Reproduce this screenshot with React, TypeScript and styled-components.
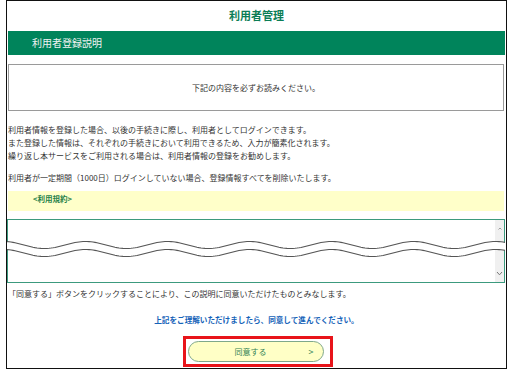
import React from 'react';
import styled, { createGlobalStyle } from 'styled-components';

const GlobalStyle = createGlobalStyle`
    html, body {
        margin: 0;
        padding: 0;
        background: #fff;
    }
    body {
        font-family: "Noto Sans CJK JP", "Noto Sans", sans-serif;
        color: #333;
    }
`;

const wavePath = (offset: number, width: number) => {
    const pts: string[] = [];
    for (let x = 0; x <= width; x += 2) {
        const y = offset + 3.5 * Math.sin(((x - 17) / 82) * Math.PI * 2);
        pts.push(`${x},${y.toFixed(2)}`);
    }
    return pts;
};

const Wave: React.FC<{ width: number }> = ({ width }) => {
    const top = wavePath(5, width);
    const bottom = wavePath(13, width);
    const band = `M${top.join(' L')} L${[...bottom].reverse().join(' L')} Z`;
    return (
        <WaveSvg width={width} height={20} viewBox={`0 0 ${width} 20`}>
            <path d={band} fill="#fff" />
            <path d={`M${top.join(' L')}`} fill="none" stroke="#555" strokeWidth={1.1} />
            <path d={`M${bottom.join(' L')}`} fill="none" stroke="#555" strokeWidth={1.1} />
        </WaveSvg>
    );
};

const App: React.FC = () => {
    return (
        <>
            <GlobalStyle />
            <Frame>
                <Title>利用者管理</Title>
                <SectionBar>利用者登録説明</SectionBar>
                <NoticeBox>下記の内容を必ずお読みください。</NoticeBox>
                <Paragraph gap={12}>
                    利用者情報を登録した場合、以後の手続きに際し、利用者としてログインできます。<br />
                    また登録した情報は、それぞれの手続きにおいて利用できるため、入力が簡素化されます。<br />
                    繰り返し本サービスをご利用される場合は、利用者情報の登録をお勧めします。
                </Paragraph>
                <Paragraph gap={9}>
                    利用者が一定期間（1000日）ログインしていない場合、登録情報すべてを削除いたします。
                </Paragraph>
                <TermsBar>&lt;利用規約&gt;</TermsBar>
                <TermsBox>
                    <TermsText />
                    <ScrollTrack>
                        <svg width="6" height="5" viewBox="0 0 6 5">
                            <path d="M1.5 3.5 L3 2 L4.5 3.5" fill="none" stroke="#888" strokeWidth="0.8" />
                        </svg>
                        <svg width="7" height="5" viewBox="0 0 7 5">
                            <path d="M1 1 L3.5 3.8 L6 1" fill="none" stroke="#777" strokeWidth="1" />
                        </svg>
                    </ScrollTrack>
                    <Wave width={499} />
                </TermsBox>
                <Paragraph gap={4}>
                    「同意する」ボタンをクリックすることにより、この説明に同意いただけたものとみなします。
                </Paragraph>
                <Guide>上記をご理解いただけましたら、同意して進んでください。</Guide>
                <Highlight>
                    <AgreeButton type="button">
                        <span>同意する</span>
                        <Arrow>&gt;</Arrow>
                    </AgreeButton>
                </Highlight>
            </Frame>
        </>
    );
};

const Frame = styled.div`
    box-sizing: border-box;
    width: 501px;
    height: 369px;
    margin-left: 6px;
    border: 1px solid #111;
    display: flex;
    flex-direction: column;
`;

const Title = styled.div`
    height: 30px;
    line-height: 28px;
    text-align: center;
    font-size: 11px;
    font-weight: bold;
    color: #0b7d55;
`;

const SectionBar = styled.div`
    height: 24px;
    margin: 0 1px 0 1px;
    padding-left: 24px;
    background: #00845b;
    color: #f2f2f2;
    font-size: 10px;
    line-height: 24px;
`;

const NoticeBox = styled.div`
    box-sizing: border-box;
    height: 47px;
    margin: 9px 2px 0 1px;
    border: 1px solid #9a9a9a;
    display: flex;
    align-items: center;
    justify-content: center;
    font-size: 8px;
    color: #333;
`;

const Paragraph = styled.p<{ gap: number }>`
    margin: ${props => props.gap}px 0 0 1px;
    font-size: 8px;
    line-height: 13px;
    color: #333;
    white-space: nowrap;
`;

const TermsBar = styled.div`
    height: 20px;
    margin: 7px 2px 0 1px;
    padding-left: 25px;
    background: #ffffc9;
    color: #1f7f4a;
    font-size: 7.5px;
    font-weight: bold;
    line-height: 16px;
`;

const TermsBox = styled.div`
    position: relative;
    box-sizing: border-box;
    height: 64px;
    margin: 8px 1px 0 0;
    border: 1px solid #3c9a7e;
    display: flex;
`;

const TermsText = styled.div`
    flex: 1;
`;

const ScrollTrack = styled.div`
    width: 9px;
    background: #f0f0f0;
    display: flex;
    flex-direction: column;
    align-items: center;
    justify-content: space-between;
    padding: 6px 0 6px;
`;

const WaveSvg = styled.svg`
    position: absolute;
    left: -1px;
    top: 20px;
`;

const Guide = styled.div`
    margin-top: 13px;
    text-align: center;
    font-size: 7.6px;
    line-height: 13px;
    font-weight: bold;
    color: #1462b8;
`;

const Highlight = styled.div`
    box-sizing: border-box;
    align-self: center;
    width: 150px;
    height: 31px;
    margin-top: 10px;
    margin-left: 2px;
    border: 3px solid #e8141a;
    display: flex;
    align-items: center;
    justify-content: center;
`;

const AgreeButton = styled.button`
    box-sizing: border-box;
    width: 136px;
    height: 21px;
    margin-left: -4px;
    padding: 0 10px 0 0;
    border: 1px solid #7fa88a;
    border-radius: 11px;
    background: #ffffc6;
    color: #2f7f55;
    font-family: "Noto Sans CJK JP", sans-serif;
    font-size: 8px;
    position: relative;
    display: flex;
    align-items: center;
    justify-content: center;
`;

const Arrow = styled.span`
    position: absolute;
    right: 9px;
    font-size: 9px;
    color: #2f7f55;
`;

export default App;
